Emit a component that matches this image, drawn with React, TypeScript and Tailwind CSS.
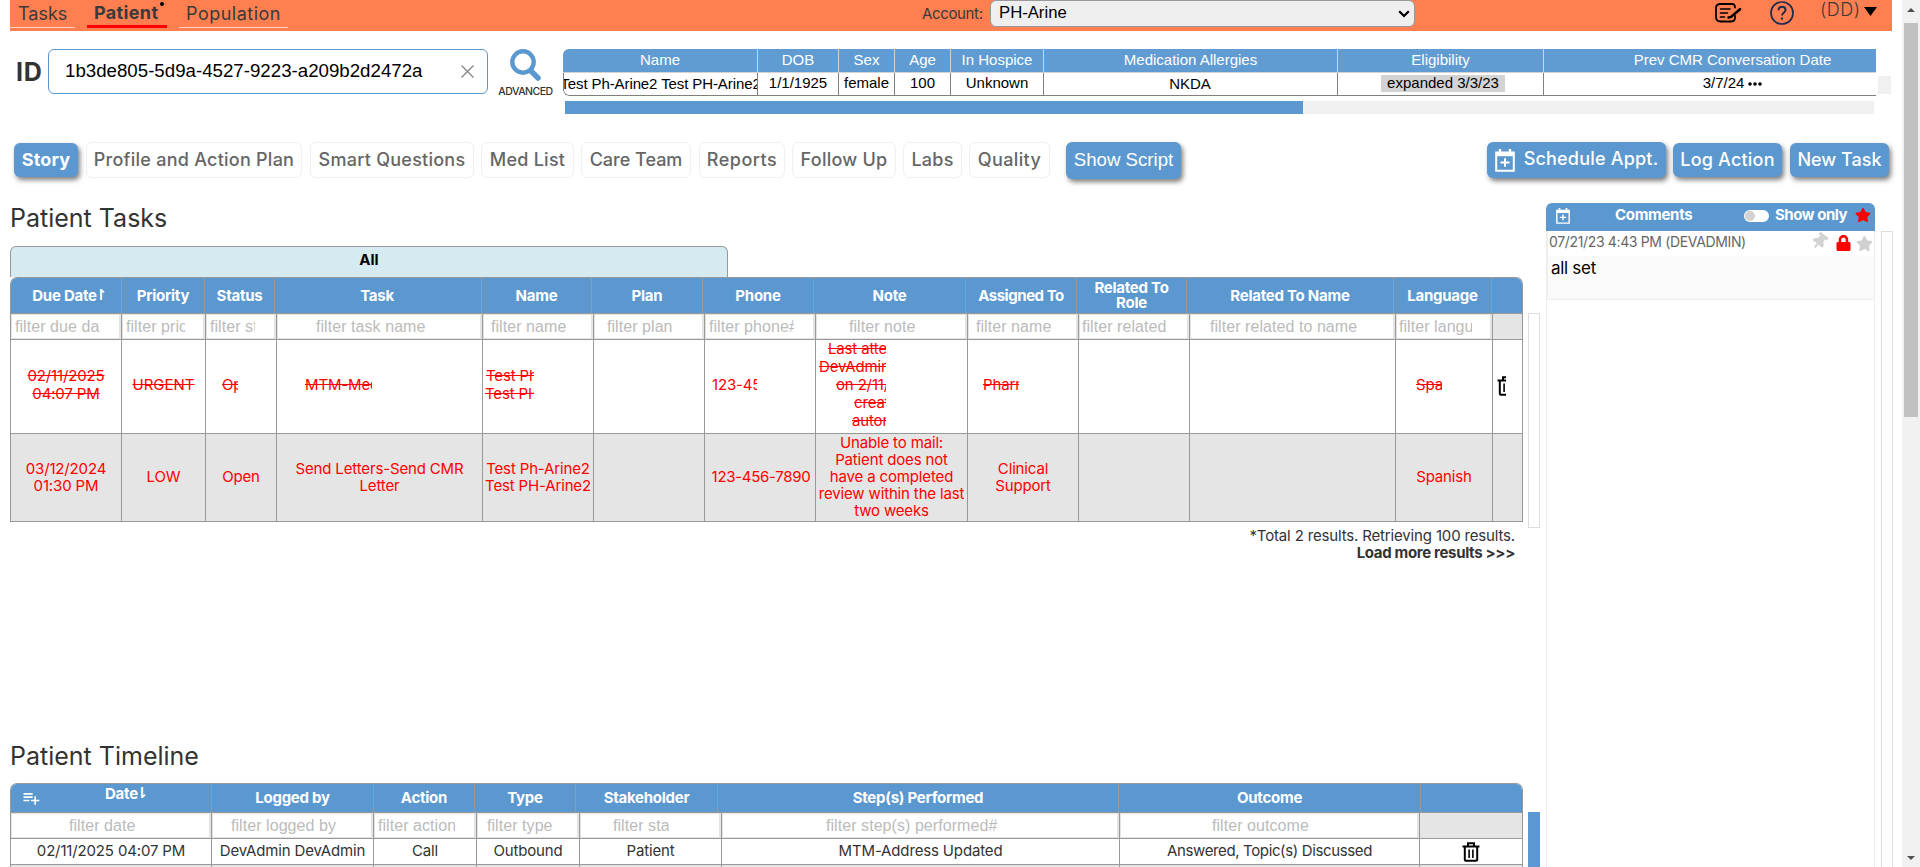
import type { ReactNode } from "react";
import { MdPlaylistAdd } from "react-icons/md";
import { FaStar, FaLock, FaThumbtack } from "react-icons/fa";

const TASK_HEAD = "grid h-9 grid-cols-[111px_83px_70px_207px_110px_111px_111px_152px_111px_110px_207px_98px_30px]";
const TASK_BODY = "grid grid-cols-[111px_84px_71px_206px_111px_111px_111px_152px_111px_111px_206px_97px_29px]";
const LINE_HEAD = "grid h-[29px] grid-cols-[201px_162px_101px_101px_142px_401px_302px_101px]";
const LINE_BODY = "grid grid-cols-[201px_162px_103px_103px_142px_398px_300px_102px]";

function CalendarPlus({ className }: { className: string }) {
  return (
    <svg viewBox="0 0 20 23" preserveAspectRatio="none" className={className} fill="none" stroke="currentColor">
      <path d="M1.2 3.5h17.6v18.3H1.2z" strokeWidth="2" />
      <path d="M1 5.2h18" strokeWidth="4" />
      <path d="M5 0v4M15 0v4" strokeWidth="2.4" />
      <path d="M10 9.3v8.4M5.5 13.5h9" strokeWidth="2" />
    </svg>
  );
}

function Trash() {
  return (
    <svg viewBox="0 0 18 20" className="h-5 w-[18px] shrink-0" fill="none" stroke="#000" strokeWidth="2">
      <path d="M0.5 4.5h17M6 4V1.2h6V4M2.8 5v12.6q0 1.2 1.2 1.2h10q1.200 0 1.200-1.200V5" />
      <path d="M7.100 7.500v8.500M10.900 7.500v8.500" strokeWidth="1.600" />
    </svg>
  );
}

function HeadCell({ children }: { children?: ReactNode }) {
  return (
    <div className="flex items-center justify-center border-r border-b border-[#999] bg-[#5b98cf] pb-px text-center text-[15px] leading-[15px] font-bold tracking-[-0.25px] text-white last:border-r-0">
      {children}
    </div>
  );
}

function SortArrow({ children }: { children: string }) {
  return <span className="-ml-[2px] w-[5px] font-['DejaVu_Sans',sans-serif] text-[15px] font-bold">{children}</span>;
}

function Filter({ text, className = "" }: { text?: string; className?: string }) {
  return (
    <div className="flex border-r border-b border-[#999] bg-[#e5e5e5] pr-px last:border-r-0">
      {text && (
        <div className="h-[25px] w-full overflow-hidden border border-[#e3e3e3] bg-white font-['Liberation_Sans',sans-serif] text-[16px] leading-[23px] tracking-[0.06px] text-[#bbb]">
          <div className={`overflow-hidden whitespace-nowrap ${className}`}>{text}</div>
        </div>
      )}
    </div>
  );
}

function Cell({ children, className = "" }: { children?: ReactNode; className?: string }) {
  return (
    <div className={`flex items-center overflow-hidden border-r border-b border-[#999] last:border-r-0 ${className}`}>
      {children}
    </div>
  );
}

function Tab({ children, className }: { children: string; className: string }) {
  return (
    <div className={`flex h-9 items-center justify-center rounded-md border border-[#f0f0f0] pb-px text-[18px] font-medium tracking-[0.25px] whitespace-nowrap text-[#666] ${className}`}>
      {children}
    </div>
  );
}

function Action({ children, className }: { children: ReactNode; className: string }) {
  return (
    <div className={`flex items-center justify-center rounded-md bg-[#5b98cf] pb-px text-[18px] font-medium tracking-[0.2px] whitespace-nowrap text-white shadow-[2px_3px_5px_rgba(0,0,0,0.5)] ${className}`}>
      {children}
    </div>
  );
}

function TopBar() {
  return (
    <header className="ml-[10px] flex h-[31px] w-[1882px] items-start bg-[#ff7f50] text-[#3a3a3a] *:shrink-0">
      <div className="h-[28px] w-[65px] border-b border-[#ffd0be] pl-2 text-[18px] leading-[27px]">Tasks</div>
      <div className="relative ml-3 h-[28px] w-20 border-b-3 border-[#f00] pl-[7px] text-[18px] leading-[26px] font-bold tracking-[0.35px]">
        Patient
        <span className="absolute top-[2px] left-[73px] size-1 rounded-full bg-black" />
      </div>
      <div className="ml-3 h-[28px] w-[109px] border-b border-[#ffd0be] pl-[7px] text-[18px] leading-[27px] tracking-[0.5px]">Population</div>
      <div className="ml-[634px] w-[68px] text-[15px] leading-[27px] tracking-[-0.35px]">Account:</div>
      <div className="flex h-[27px] w-[425px] justify-between rounded-md border border-[#999] bg-[#efefef] pr-1 pl-2 font-['Liberation_Sans',sans-serif] text-[16.7px] leading-[23px] text-black">
        PH-Arine
        <svg viewBox="0 0 12 8" className="mt-[9px] h-2 w-3" fill="none" stroke="#000" strokeWidth="2.2"><path d="M1.200 1.200 6 6l4.800-4.800" /></svg>
      </div>
      <svg viewBox="0 0 28 20" className="mt-[3px] ml-[299px] h-5 w-7" fill="none" stroke="#000" strokeWidth="1.800" strokeLinecap="round">
        <path d="M21 4.500q0-3.500-3-3.500H6.500Q2 1 2 5v9q0 4.500 4.500 4.500H17q4 0 4-4V13" />
        <path d="M6.500 6h9.500M6.500 10h7M6.500 14h4" strokeWidth="1.600" />
        <path d="m14.500 14.500 2.500-.6L26 6.200" strokeWidth="2.600" />
      </svg>
      <svg viewBox="0 0 24 24" className="mt-px ml-[28px] size-6" fill="none" stroke="#1c2b50" strokeWidth="2">
        <circle cx="12" cy="12" r="11" strokeWidth="1.700" />
        <path d="M8.500 9.200c0-4.600 7-4.400 7-.2 0 2.700-3.500 2.700-3.500 5.400M12 16.500v2.200" />
      </svg>
      <div className="ml-[26px] w-[44px] text-[18px] leading-[19px] font-light tracking-[0.5px]">(DD)</div>
      <svg viewBox="0 0 13 9" className="mt-[7px] h-[9px] w-[13px]"><path d="M0 0h13L6.500 9z" /></svg>
    </header>
  );
}

function PatientCell({ head, children, className, valueClass = "" }: { head: string; children: ReactNode; className: string; valueClass?: string }) {
  return (
    <div className={`shrink-0 text-center whitespace-nowrap ${className}`}>
      <div className="h-6 border-r border-b border-[#d3d3d3] bg-[#609cd1] leading-[22px] text-white">{head}</div>
      <div className={`flex h-[23px] justify-center overflow-hidden border-r border-b border-[#808080] leading-[20px] text-black ${valueClass}`}>{children}</div>
    </div>
  );
}

function PatientBar() {
  return (
    <section className="ml-[10px] flex h-[111px] pt-[18px]">
      <div className="w-[38px] pl-[6px] text-[25px] leading-[46px] font-bold tracking-[0.8px] text-[#333]">ID</div>
      <div className="flex h-[45px] w-[440px] items-center justify-between rounded-md border border-[#5b98cf] pr-[13px] pl-4 font-['Liberation_Sans',sans-serif] text-[18.7px] text-black">
        1b3de805-5d9a-4527-9223-a209b2d2472a
        <svg viewBox="0 0 13 13" className="size-[13px]" stroke="#888" strokeWidth="1.400"><path d="m.5.5 12 12M12.500.5l-12 12" /></svg>
      </div>
      <div className="flex w-[75px] flex-col items-center">
        <svg viewBox="0 0 32 32" className="h-8 w-8" fill="none" stroke="#5b98cf">
          <circle cx="13" cy="13" r="10.700" strokeWidth="4.400" />
          <path d="m21.500 22.500 6.500 6.500" strokeWidth="5.500" strokeLinecap="round" />
        </svg>
        <div className="mt-[4px] text-[10.500px] leading-[14px] font-medium tracking-[-0.5px] text-[#333]">ADVANCED</div>
      </div>
      <div className="w-[1313px] font-['Liberation_Sans',sans-serif] text-[15px]">
        <div className="flex h-[47px] overflow-hidden rounded-l-md">
          <PatientCell head="Name" className="w-[195px]" valueClass="rounded-bl-md border-l leading-[22px]! tracking-[-0.1px]">Test Ph-Arine2 Test PH-Arine2</PatientCell>
          <PatientCell head="DOB" className="w-[81px]">1/1/1925</PatientCell>
          <PatientCell head="Sex" className="w-14">female</PatientCell>
          <PatientCell head="Age" className="w-14">100</PatientCell>
          <PatientCell head="In Hospice" className="w-[93px]">Unknown</PatientCell>
          <PatientCell head="Medication Allergies" className="w-[294px]" valueClass="leading-[22px]! pr-px">NKDA</PatientCell>
          <PatientCell head="Eligibility" className="w-[206px]">
            <span className="mt-[2px] ml-[5px] h-[17px] w-[124px] bg-[#d3d3d3] leading-[16px]">expanded 3/3/23</span>
          </PatientCell>
          <PatientCell head="Prev CMR Conversation Date" className="w-[378px]">
            3/7/24
            <svg viewBox="0 0 14 4" className="mt-[9px] ml-1 h-1 w-[14px]"><circle cx="2" cy="2" r="1.800" /><circle cx="7" cy="2" r="1.800" /><circle cx="12" cy="2" r="1.800" /></svg>
          </PatientCell>
        </div>
        <div className="mt-[5px] ml-[2px] h-[13px] w-[1309px] bg-[#f0f0f0]"><div className="h-full w-[738px] bg-[#5b98cf]" /></div>
      </div>
      <div className="mt-[27px] ml-[2px] h-[18px] w-[13px] bg-[#f0f0f0]" />
    </section>
  );
}

function TabBar() {
  return (
    <nav className="ml-[14px] flex h-[38px] items-start">
      <Action className="mt-px h-[34px] w-16 font-bold!">Story</Action>
      <Tab className="ml-[8px] w-[216px]">Profile and Action Plan</Tab>
      <Tab className="ml-[8px] w-[164px]">Smart Questions</Tab>
      <Tab className="ml-[7px] w-[93px]">Med List</Tab>
      <Tab className="ml-[7px] w-[110px] tracking-[0px]!">Care Team</Tab>
      <Tab className="ml-[8px] w-[86px] tracking-[0.5px]!">Reports</Tab>
      <Tab className="ml-[7px] w-[104px]">Follow Up</Tab>
      <Tab className="ml-[7px] w-[59px]">Labs</Tab>
      <Tab className="ml-[7px] w-[81px] tracking-[0.35px]!">Quality</Tab>
      <Action className="ml-[16px] h-[37px] w-[115px] font-['Liberation_Sans',sans-serif] text-[18.670px]! font-normal! tracking-normal!">Show Script</Action>
      <Action className="ml-[306px] h-9 w-[179px]">
        <CalendarPlus className="mt-[2px] mr-[9px] h-[23px] w-5" />
        <span className="mb-[2px]">Schedule Appt.</span>
      </Action>
      <Action className="mt-px ml-[7px] h-[34px] w-[109px]">Log Action</Action>
      <Action className="mt-px ml-[8px] h-[34px] w-[99px] tracking-normal!">New Task</Action>
    </nav>
  );
}

function TaskTable() {
  return (
    <div className="flex h-[246px] items-start">
      <div className="w-[1513px] overflow-hidden rounded-t-[7px] border-x border-t border-[#999]">
        <div className={TASK_HEAD}>
          <HeadCell>Due Date<SortArrow>↾</SortArrow></HeadCell>
          <HeadCell>Priority</HeadCell>
          <HeadCell>Status</HeadCell>
          <HeadCell><span className="mr-[2px]">Task</span></HeadCell>
          <HeadCell>Name</HeadCell>
          <HeadCell>Plan</HeadCell>
          <HeadCell>Phone</HeadCell>
          <HeadCell>Note</HeadCell>
          <HeadCell><span className="tracking-[-0.45px]">Assigned To</span></HeadCell>
          <HeadCell>Related To<br />Role</HeadCell>
          <HeadCell>Related To Name</HeadCell>
          <HeadCell>Language</HeadCell>
          <HeadCell />
        </div>
        <div className={`${TASK_BODY} h-[26px]`}>
          <Filter text="filter due date" className="ml-[3px] w-[85px]" />
          <Filter text="filter priority" className="ml-[3px] w-[59px]" />
          <Filter text="filter status" className="ml-[3px] w-[45px]" />
          <Filter text="filter task name" className="ml-[38px]" />
          <Filter text="filter name" className="ml-[7px]" />
          <Filter text="filter plan" className="ml-[12px]" />
          <Filter text="filter phone#" className="ml-[3px] w-[85px]" />
          <Filter text="filter note" className="ml-[32px]" />
          <Filter text="filter name" className="ml-[7px]" />
          <Filter text="filter related to" className="ml-[2px] w-[87px]" />
          <Filter text="filter related to name" className="ml-[19px]" />
          <Filter text="filter language" className="ml-[2px] w-[73px]" />
          <Filter />
        </div>
        <div className={`${TASK_BODY} h-[94px] text-[15px] leading-[18px] tracking-[-0.15px] whitespace-nowrap text-[#f00] *:pb-[3px]`}>
          <Cell className="justify-center text-center line-through">02/11/2025<br />04:07 PM</Cell>
          <Cell className="justify-center line-through tracking-normal">URGENT</Cell>
          <Cell><div className="ml-4 w-4 overflow-hidden line-through">Open</div></Cell>
          <Cell><div className="ml-[28px] w-[67px] overflow-hidden line-through">MTM-Medication</div></Cell>
          <Cell><div className="ml-[2px] w-[49px] overflow-hidden line-through"><div className="pl-px">Test Ph-Arine2</div>Test PH-Arine2</div></Cell>
          <Cell />
          <Cell><div className="ml-[7px] w-[45px] overflow-hidden">123-456-7890</div></Cell>
          <Cell>
            <div className="w-[70px] overflow-hidden line-through">
              <div className="ml-[12px]">Last attempt</div>
              <div className="ml-[3px]">DevAdmin</div>
              <div className="ml-5">on 2/11/2025</div>
              <div className="ml-[38px]">created</div>
              <div className="ml-9">automatically</div>
            </div>
          </Cell>
          <Cell><div className="ml-[15px] w-9 overflow-hidden line-through">Pharmacist</div></Cell>
          <Cell />
          <Cell />
          <Cell><div className="ml-[20px] w-[26px] overflow-hidden line-through">Spanish</div></Cell>
          <Cell><div className="mt-[2px] ml-[4px] w-[9px] overflow-hidden"><Trash /></div></Cell>
        </div>
        <div className={`${TASK_BODY} h-[88px] bg-[#e5e5e5] text-center text-[15px] leading-[17px] tracking-[-0.150px] text-[#f00] *:pb-[2px]`}>
          <Cell className="justify-center">03/12/2024<br />01:30 PM</Cell>
          <Cell className="justify-center">LOW</Cell>
          <Cell className="justify-center">Open</Cell>
          <Cell className="justify-center">Send Letters-Send CMR<br />Letter</Cell>
          <Cell className="justify-center whitespace-nowrap">Test Ph-Arine2<br />Test PH-Arine2</Cell>
          <Cell />
          <Cell className="justify-center pl-[2px] tracking-[-0.300px]">123-456-7890</Cell>
          <Cell className="justify-center whitespace-nowrap">Unable to mail:<br />Patient does not<br />have a completed<br />review within the last<br />two weeks</Cell>
          <Cell className="justify-center">Clinical<br />Support</Cell>
          <Cell />
          <Cell />
          <Cell className="justify-center">Spanish</Cell>
          <Cell />
        </div>
      </div>
      <div className="mt-9 ml-[5px] h-[215px] w-3 border border-[#ddd]" />
    </div>
  );
}

function Timeline() {
  return (
    <div className="flex">
      <div className="w-[1513px] overflow-hidden rounded-t-[7px] border-x border-t border-[#999]">
        <div className={LINE_HEAD}>
          <HeadCell>
            <span className="flex w-full items-center">
              <MdPlaylistAdd className="ml-[10px] size-[20px]" />
              <span className="mb-[8px] ml-[64px] flex">Date<SortArrow>⇂</SortArrow></span>
            </span>
          </HeadCell>
          <HeadCell>Logged by</HeadCell>
          <HeadCell>Action</HeadCell>
          <HeadCell>Type</HeadCell>
          <HeadCell>Stakeholder</HeadCell>
          <HeadCell>Step(s) Performed</HeadCell>
          <HeadCell>Outcome</HeadCell>
          <HeadCell />
        </div>
        <div className={`${LINE_BODY} h-[26px]`}>
          <Filter text="filter date" className="ml-[57px]" />
          <Filter text="filter logged by" className="ml-[18px]" />
          <Filter text="filter action" className="ml-[3px] w-[77px]" />
          <Filter text="filter type" className="ml-[9px]" />
          <Filter text="filter stakeholder" className="ml-[32px] w-[56px]" />
          <Filter text="filter step(s) performed#" className="ml-[103px]" />
          <Filter text="filter outcome" className="ml-[91px]" />
          <Filter />
        </div>
        <div className={`${LINE_BODY} h-[26px] text-[15px] tracking-[-0.150px] text-[#333]`}>
          <Cell className="justify-center">02/11/2025 04:07 PM</Cell>
          <Cell className="justify-center">DevAdmin DevAdmin</Cell>
          <Cell className="justify-center">Call</Cell>
          <Cell className="justify-center">Outbound</Cell>
          <Cell className="justify-center">Patient</Cell>
          <Cell className="justify-center">MTM-Address Updated</Cell>
          <Cell className="justify-center tracking-[-0.370px]">Answered, Topic(s) Discussed</Cell>
          <Cell className="justify-center"><Trash /></Cell>
        </div>
        <div className={`${LINE_BODY} h-[26px] bg-[#e5e5e5]`}>
          <Cell /><Cell /><Cell /><Cell /><Cell /><Cell /><Cell /><Cell />
        </div>
      </div>
      <div className="mt-[29px] ml-[5px] w-3 bg-[#5b98cf]" />
    </div>
  );
}

function Comments() {
  return (
    <aside className="flex pt-[23px]">
      <div className="h-[664px] w-[329px]">
        <div className="flex h-7 items-center rounded-t-md bg-[#5b98cf] pb-1 text-[15px] font-bold text-white">
          <CalendarPlus className="mt-px ml-[10px] h-4 w-[14px]" />
          <span className="ml-[45px] w-[129px] tracking-[-0.300px]">Comments</span>
          <span className="mt-[2px] flex h-3 w-[25px] rounded-full bg-white p-px"><span className="size-[10px] rounded-full bg-[#d3d3d3]" /></span>
          <span className="ml-[6px] w-[80px] tracking-[-0.450px]">Show only</span>
          <FaStar className="size-4 text-[#f00]" />
        </div>
        <div className="h-[636px] border-x border-[#eee]">
          <div className="flex h-[69px] flex-col border-b border-l border-[#eee]">
            <div className="flex h-[25px] items-start pl-px text-[14px] leading-[22px] tracking-[-0.350px] text-[#666]">
              <span className="w-[263px]">07/21/23 4:43 PM (DEVADMIN)</span>
              <FaThumbtack className="mt-[2px] h-[17px] w-[15px] rotate-[38deg] text-[#d3d3d3]" />
              <FaLock className="mt-1 ml-[9px] h-4 w-[15px] text-[#f00]" />
              <FaStar className="mt-1 ml-[5px] size-[17px] text-[#d0d0d0]" />
            </div>
            <div className="grow bg-[#fafafa] pl-[3px] text-[17px] leading-[25px] tracking-[-0.300px] text-black">all set</div>
          </div>
        </div>
      </div>
      <div className="mt-7 ml-[6px] w-3 border-x border-t border-[#ddd]" />
    </aside>
  );
}

export default function App() {
  return (
    <div className="flex h-[867px] w-[1920px] overflow-hidden bg-white font-['Inter',sans-serif]">
      <main className="h-[867px] w-[1902px] overflow-hidden">
        <TopBar />
        <PatientBar />
        <TabBar />
        <div className="flex">
          <div className="ml-[10px] w-[1536px]">
            <h1 className="h-[66px] pt-5 text-[25px] leading-9 text-[#333]">Patient Tasks</h1>
            <div className="flex h-[31px] w-[718px] justify-center rounded-t-md border border-b-0 border-[#999] bg-[#d6eaf1] pt-px text-[15px] leading-6 font-bold text-black">All</div>
            <TaskTable />
            <div className="h-[215px] w-[1505px] pt-1 text-right text-[15px] leading-[17px] tracking-[-0.160px] text-[#333]">
              *Total 2 results. Retrieving 100 results.
              <div className="font-bold tracking-[-0.330px]">Load more results &gt;&gt;&gt;</div>
            </div>
            <h1 className="h-[45px] text-[25px] leading-9 text-[#333]">Patient Timeline</h1>
            <Timeline />
          </div>
          <Comments />
        </div>
      </main>
      <div className="flex w-[18px] flex-col items-center bg-[#f1f1f1]">
        <svg viewBox="0 0 8 4" className="mt-2 h-1 w-2" fill="#505050"><path d="M4 0l4 4H0z" /></svg>
        <div className="mt-[11px] h-[394px] w-[14px] bg-[#c1c1c1]" />
        <svg viewBox="0 0 8 4" className="mt-auto mb-[7px] h-1 w-2" fill="#505050"><path d="M4 4l4-4H0z" /></svg>
      </div>
    </div>
  );
}
